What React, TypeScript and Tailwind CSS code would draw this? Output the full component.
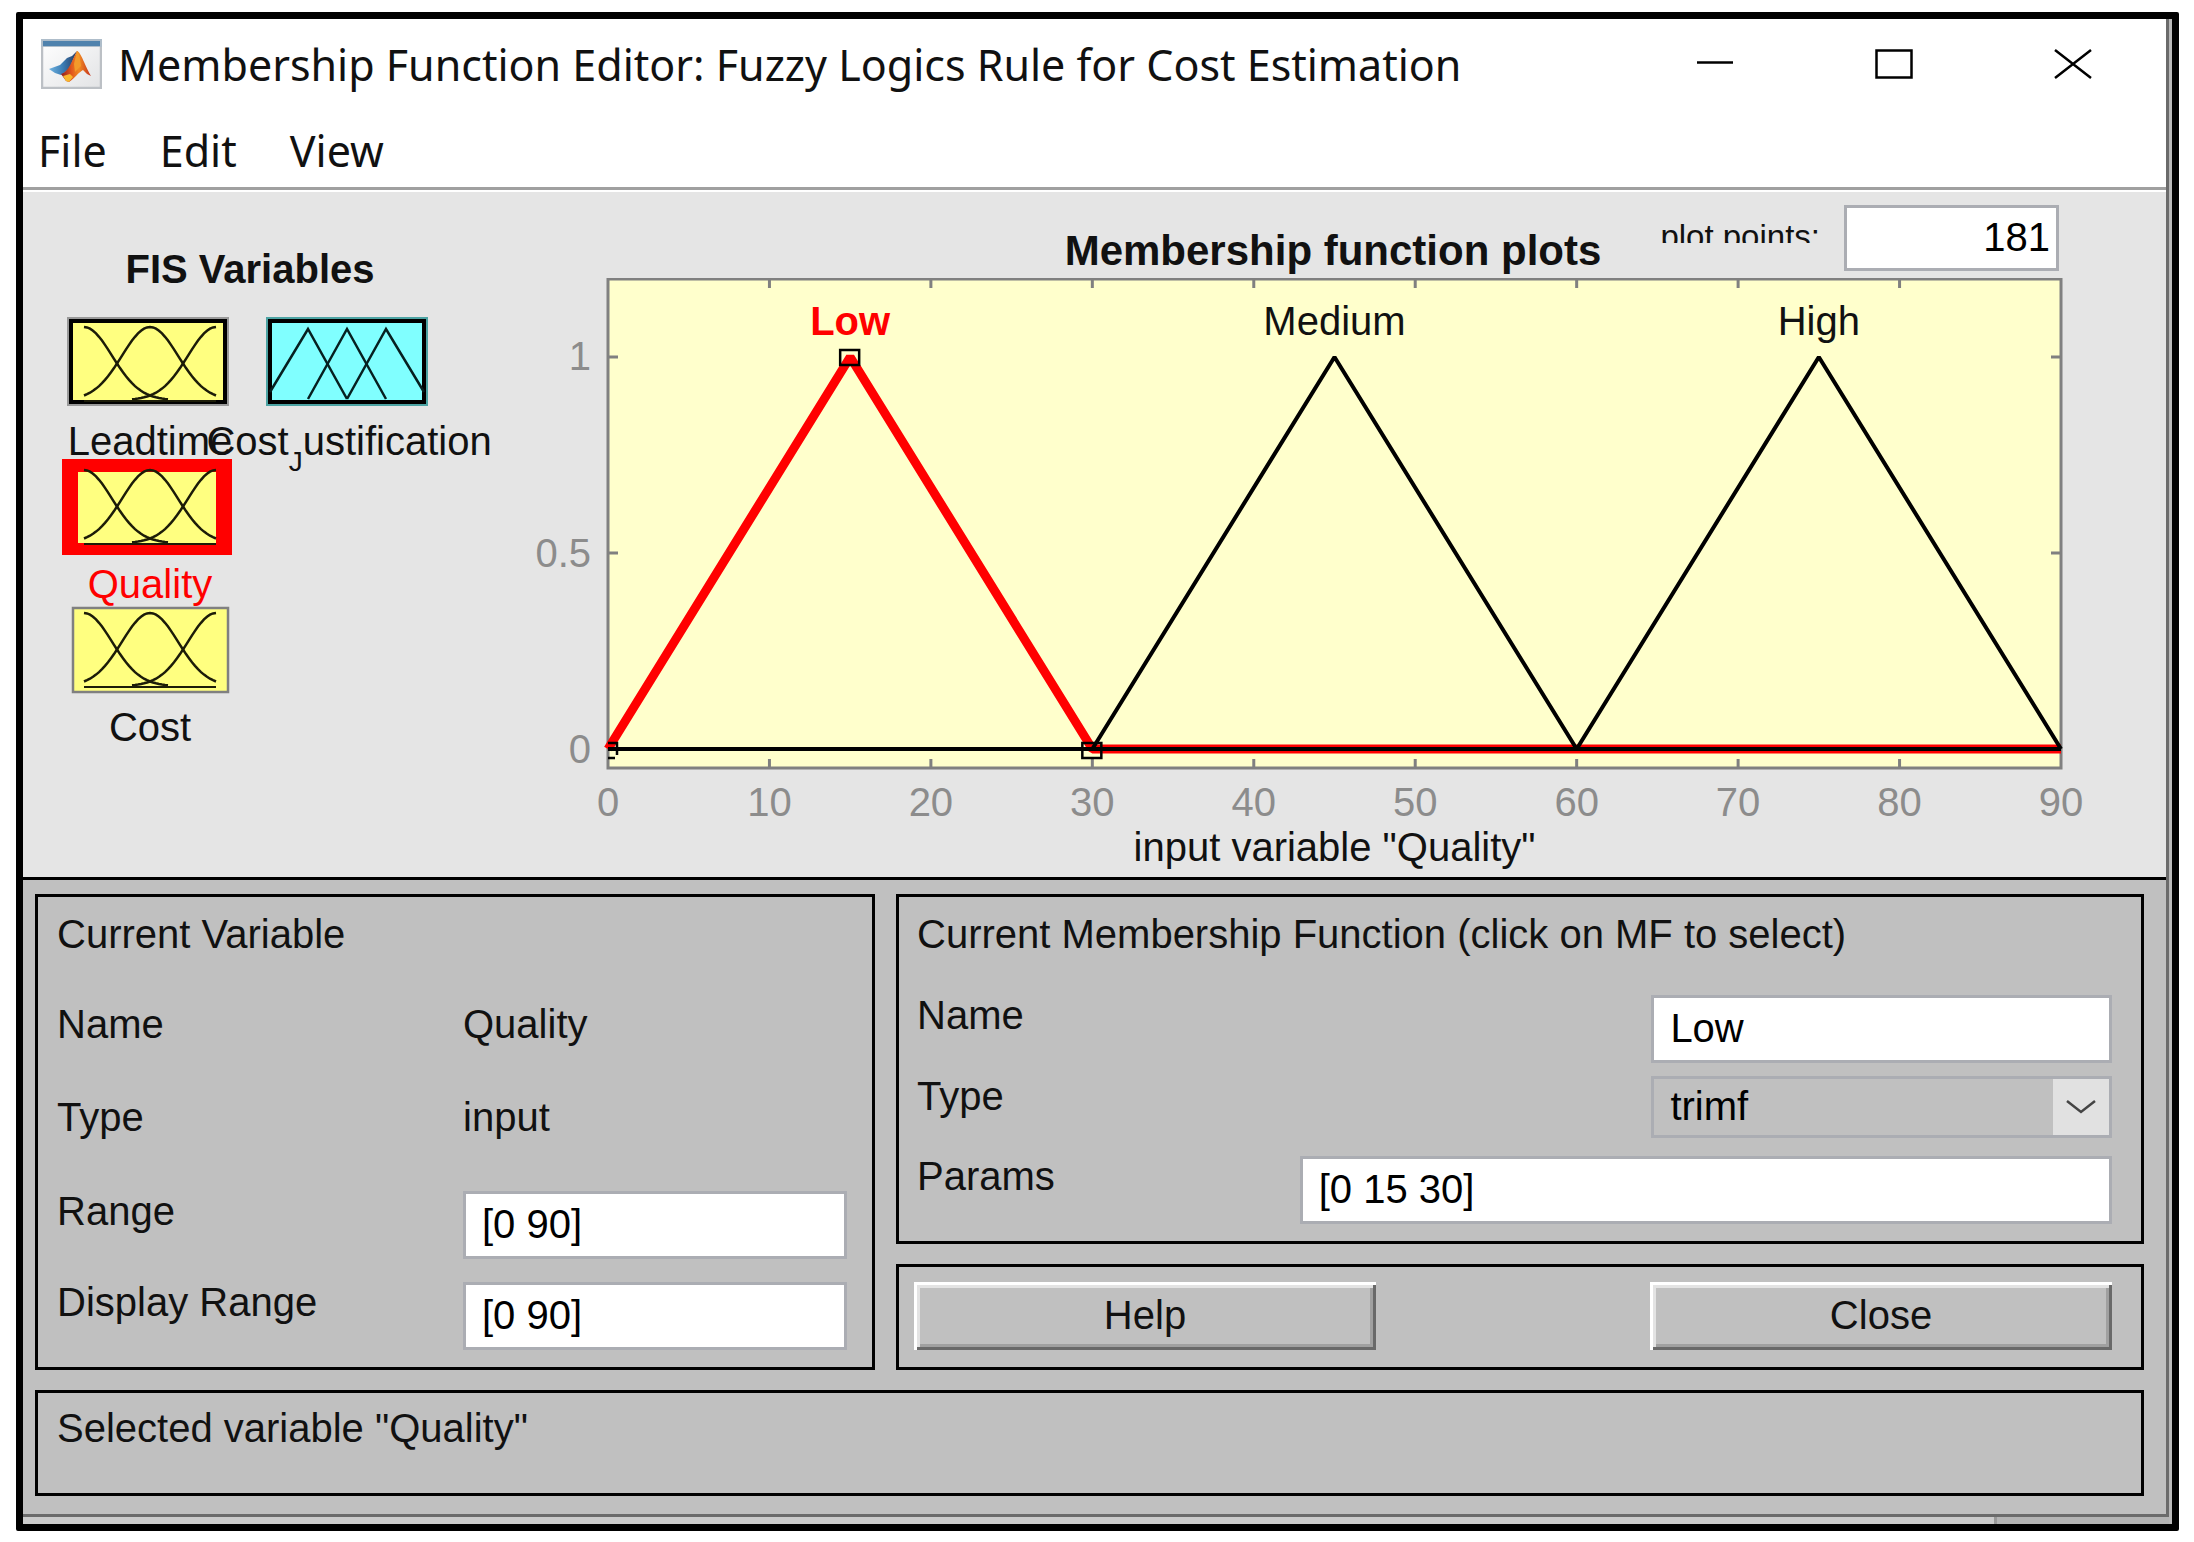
import type { ReactNode } from "react";

type Variable = {
  name: ReactNode;
  kind: "gauss" | "tri";
  state?: "active" | "idle";
};

const PLOT = { left: 81, right: 1534, top: 1, bottom: 490, one: 79, zero: 471 };

const toX = (value: number) =>
  PLOT.left + ((PLOT.right - PLOT.left) * value) / 90;

const toY = (value: number) => PLOT.zero - (PLOT.zero - PLOT.one) * value;

const gaussPath = (center: number) => {
  const points: string[] = [];
  for (let x = 22; x <= 154; x += 3) {
    if (Math.abs(x - center) > 84) continue;
    const y = 84 - 73 * Math.exp(-((x - center) ** 2) / (2 * 28 ** 2));
    points.push(`${x},${y.toFixed(1)}`);
  }
  return `M${points.join("L")}`;
};

const MatlabIcon = () => (
  <svg viewBox="0 0 61 50" className="w-[61px] h-[50px]" aria-hidden="true">
    <defs>
      <linearGradient id="frame" x1="0" y1="0" x2="1" y2="1">
        <stop offset="0" stopColor="#ffffff" />
        <stop offset="1" stopColor="#e2e3e5" />
      </linearGradient>
      <linearGradient id="flame" x1="0" y1="0" x2="1" y2="0">
        <stop offset="0" stopColor="#8c1c1c" />
        <stop offset="0.35" stopColor="#e2581e" />
        <stop offset="0.6" stopColor="#f08a24" />
        <stop offset="1" stopColor="#c5301c" />
      </linearGradient>
      <linearGradient id="wing" x1="0" y1="0" x2="1" y2="0">
        <stop offset="0" stopColor="#6fb3e0" />
        <stop offset="0.5" stopColor="#3b7cb4" />
        <stop offset="1" stopColor="#28395f" />
      </linearGradient>
    </defs>
    <rect x="1" y="1" width="59" height="48" fill="url(#frame)" stroke="#bcc0c5" strokeWidth="2.5" />
    <rect x="0" y="0" width="61" height="8" fill="#aebdca" />
    <rect x="2" y="2" width="57" height="5" fill="#4f82ad" />
    <path d="M8 30L19 26L26 19L31 17L36 12L28 30L20 36L14 34Z" fill="url(#wing)" />
    <path d="M36 12C40 13 44 27 50 37L46 35L42 31C38 33 34 39 28 43L25 42L20 35C28 33 31 21 36 12Z" fill="url(#flame)" />
    <path d="M36 12C38 13 39 20 40 27L34 33L33 25Z" fill="#f39a2b" />
    <path d="M22 37L29 35L32 38L28 43L25 42Z" fill="#f8b62d" />
  </svg>
);

const Thumbnail = ({ kind, state }: Pick<Variable, "kind" | "state">) => (
  <svg viewBox="0 0 170 96" className="block w-[170px] h-24" fill="none" aria-hidden="true">
    {state === "active" && (
      <>
        <rect width="170" height="96" fill="#ff0000" />
        <rect x="16" y="13" width="138" height="71" fill="#ffff80" />
      </>
    )}
    {state === "idle" && (
      <rect x="11" y="6" width="155" height="84" fill="#ffff80" stroke="#808080" strokeWidth="2.5" />
    )}
    {!state && (
      <>
        <rect x="5" y="1" width="162" height="89" fill={kind === "tri" ? "#4ca3a3" : "#999"} />
        <rect x="9" y="5" width="154" height="81" fill={kind === "tri" ? "#80ffff" : "#ffff80"} stroke="#000" strokeWidth="4" />
      </>
    )}
    {kind === "gauss" ? (
      <g stroke="#1c1c08" strokeWidth="2.5">
        <path d={gaussPath(22)} />
        <path d={gaussPath(88)} />
        <path d={gaussPath(154)} />
        <path d="M22 85H154" strokeWidth="2" />
      </g>
    ) : (
      <g stroke="#062020" strokeWidth="2.5">
        <path d="M9 76L47 13L86 83" />
        <path d="M47 83L86 13L125 83" />
        <path d="M86 83L125 13L163 76" />
      </g>
    )}
  </svg>
);

const VariableTile = ({ name, kind, state }: Variable) => (
  <button type="button" className="flex flex-col items-center w-[170px]">
    <Thumbnail kind={kind} state={state} />
    <span
      className={`pt-3 pl-1.5 leading-[35px] whitespace-nowrap ${
        state === "active" ? "text-[#ff0000]" : "text-[#111]"
      }`}
    >
      {name}
    </span>
  </button>
);

const MembershipPlot = () => {
  const ticks = Array.from({ length: 10 }, (_, i) => i * 10);
  const { left, right, top, bottom } = PLOT;

  return (
    <svg viewBox="0 0 1639 599" className="block w-full h-auto">
      <rect x={left} y={top} width={right - left} height={bottom - top} fill="#ffffcc" stroke="#808080" strokeWidth="3" />
      <g stroke="#808080" strokeWidth="3">
        {ticks.slice(1, -1).map((t) => (
          <path key={t} d={`M${toX(t)} ${top}V${top + 9}M${toX(t)} ${bottom}V${bottom - 9}`} />
        ))}
        {[0.5, 1].map((t) => (
          <path key={t} d={`M${left} ${toY(t)}H${left + 10}M${right} ${toY(t)}H${right - 10}`} />
        ))}
      </g>

      <g fill="#8c8c8c" textAnchor="middle">
        {ticks.map((t) => (
          <text key={t} x={toX(t)} y="538">{t}</text>
        ))}
      </g>
      <g fill="#8c8c8c" textAnchor="end">
        <text x="64" y="92">1</text>
        <text x="64" y="289">0.5</text>
        <text x="64" y="485">0</text>
      </g>

      <g fill="none" strokeLinejoin="bevel">
        <path d={`M${toX(0)} ${toY(0)}L${toX(15)} ${toY(1)}L${toX(30)} ${toY(0)}H${right}`} stroke="#ff0000" strokeWidth="9" />
        <path d={`M${left} ${toY(0)}H${right}`} stroke="#000" strokeWidth="4" />
        <path d={`M${toX(30)} ${toY(0)}L${toX(45)} ${toY(1)}L${toX(60)} ${toY(0)}`} stroke="#000" strokeWidth="4" />
        <path d={`M${toX(60)} ${toY(0)}L${toX(75)} ${toY(1)}L${toX(90)} ${toY(0)}`} stroke="#000" strokeWidth="4" />
      </g>
      <g fill="none" stroke="#000" strokeWidth="2.5">
        <rect x={toX(15) - 10} y={toY(1) - 7} width="19" height="15" />
        <rect x={toX(30) - 10} y={toY(0) - 6} width="19" height="15" />
        <path d={`M${left} ${toY(0) - 6}H${left + 9}V${toY(0) + 6}M${left} ${toY(0) + 9}H${left + 7}`} />
      </g>

      <g textAnchor="middle" fill="#111">
        <text x={toX(15)} y="57" fill="#ff0000" fontWeight="bold">Low</text>
        <text x={toX(45)} y="57">Medium</text>
        <text x={toX(75)} y="57">High</text>
        <text x={toX(45)} y="583">input variable "Quality"</text>
      </g>
    </svg>
  );
};

const fieldClass =
  "block w-full h-[68px] px-4 pb-0.5 border-[3px] border-[#abadb3] bg-white text-black";

const buttonClass =
  "h-[68px] pb-0.5 bg-[#c0c0c0] shadow-[inset_3px_3px_#fff,inset_-3px_-3px_#696969,inset_6px_6px_#e3e3e3,inset_-6px_-6px_#a0a0a0]";

const TitleBar = () => (
  <header className="bg-white font-['Noto_Sans',sans-serif] border-b-[3px] border-[#a0a0a0]">
    <div className="flex items-center h-[90px] pl-[18px] pr-1">
      <MatlabIcon />
      <h1 className="flex-1 pt-0.5 pl-4 text-[43px] leading-[50px] whitespace-nowrap">
        Membership Function Editor: Fuzzy Logics Rule for Cost Estimation
      </h1>
      <div className="flex">
        <button type="button" aria-label="Minimize" className="flex items-center justify-center w-[179px] h-[90px]">
          <svg viewBox="0 0 38 30" className="w-[38px] h-[30px]" aria-hidden="true">
            <path d="M1 13.5H37" stroke="#000" strokeWidth="2.5" />
          </svg>
        </button>
        <button type="button" aria-label="Maximize" className="flex items-center justify-center w-[179px] h-[90px]">
          <svg viewBox="0 0 38 30" className="w-[38px] h-[30px]" aria-hidden="true">
            <rect x="1.5" y="1.5" width="35" height="27" fill="none" stroke="#000" strokeWidth="2.5" />
          </svg>
        </button>
        <button type="button" aria-label="Close window" className="flex items-center justify-center w-[179px] h-[90px]">
          <svg viewBox="0 0 38 30" className="w-[38px] h-[30px]" aria-hidden="true">
            <path d="M1 1L37 29M37 1L1 29" stroke="#000" strokeWidth="2.5" />
          </svg>
        </button>
      </div>
    </div>
    <nav className="flex gap-[53px] h-[78px] px-[15px] pt-[17px] text-[43px] leading-[50px]">
      <button type="button" className="self-start">File</button>
      <button type="button" className="self-start">Edit</button>
      <button type="button" className="self-start">View</button>
    </nav>
  </header>
);

const VariablePanel = () => (
  <section className="border-[3px] border-black pt-[17px] pl-[19px] pr-[25px] pb-[17px]">
    <h2 className="h-[90px]">Current Variable</h2>
    <div className="grid grid-cols-[406fr_384fr] grid-rows-[93px_94px_91px_68px]">
      <span>Name</span>
      <span>Quality</span>
      <span>Type</span>
      <span>input</span>
      <label htmlFor="range">Range</label>
      <input id="range" className={fieldClass} defaultValue="[0 90]" />
      <label htmlFor="display-range">Display Range</label>
      <input id="display-range" className={fieldClass} defaultValue="[0 90]" />
    </div>
  </section>
);

const FunctionPanel = () => (
  <section className="border-[3px] border-black pt-[17px] pl-[18px] pr-[29px] pb-[17px]">
    <h2 className="h-[81px] whitespace-nowrap">
      Current Membership Function (click on MF to select)
    </h2>
    <div className="grid grid-cols-[383fr_352fr_461fr] grid-rows-[81px_80px_68px]">
      <label htmlFor="mf-name" className="col-span-2">Name</label>
      <input id="mf-name" className={fieldClass} defaultValue="Low" />
      <label htmlFor="mf-type" className="col-span-2">Type</label>
      <div className="relative">
        <select
          id="mf-type"
          className="block appearance-none w-full h-[62px] px-4 pb-0.5 border-[3px] border-[#abadb3] bg-[#c0c0c0] text-black"
        >
          <option>trimf</option>
        </select>
        <span className="absolute right-[3px] top-[3px] flex items-center justify-center w-14 h-14 bg-[#e1e1e1] pointer-events-none">
          <svg viewBox="0 0 30 14" className="w-[30px] h-[14px]" aria-hidden="true">
            <path d="M1 1L15 12L29 1" fill="none" stroke="#444" strokeWidth="2.5" />
          </svg>
        </span>
      </div>
      <label htmlFor="mf-params">Params</label>
      <input id="mf-params" className={`${fieldClass} col-span-2`} defaultValue="[0 15 30]" />
    </div>
  </section>
);

const App = () => {
  return (
    <div className="bg-white pt-3 pl-4 pr-[15px] pb-2.5 font-['Liberation_Sans',Arial,sans-serif] text-[40px] leading-10 text-[#111]">
      <div className="border-[7px] border-black bg-[#b8b8b8] pr-[3px] rounded-xs">
        <div className="border-r-[3px] border-b-[3px] border-[#6b6b6b]">
          <TitleBar />

          <main>
            <div className="flex bg-[#e5e5e5] border-t-2 border-t-white border-b-[3px] border-b-black">
              <aside className="w-[504px] shrink-0 pl-[39px] pt-[57px]">
                <h2 className="w-[376px] mb-[27px] text-center font-bold">
                  FIS Variables
                </h2>
                <div className="grid grid-cols-[170px_170px] gap-x-[29px]">
                  <VariableTile name="Leadtime" kind="gauss" />
                  <VariableTile
                    name={<>Cost<sub className="text-[28px] -bottom-4">J</sub>ustification</>}
                    kind="tri"
                  />
                  <VariableTile name="Quality" kind="gauss" state="active" />
                  <span />
                  <VariableTile name="Cost" kind="gauss" state="idle" />
                </div>
              </aside>

              <div className="flex-1 min-w-0">
                <div className="grid grid-cols-[1fr_auto_1fr] h-[86px] pt-[13px] pl-20 pr-[107px]">
                  <h2 className="col-start-2 pt-[26px] text-[42px] font-bold whitespace-nowrap">
                    Membership function plots
                  </h2>
                  <div className="flex justify-end gap-6">
                    <label htmlFor="points" className="mt-4 h-[22px] overflow-hidden text-[33px] leading-8 whitespace-nowrap">
                      plot points:
                    </label>
                    <input
                      id="points"
                      className="w-[215px] h-[66px] px-1.5 pb-0.5 border-[3px] border-[#abadb3] bg-white text-right text-black"
                      defaultValue="181"
                    />
                  </div>
                </div>
                <MembershipPlot />
              </div>
            </div>

            <div className="grid grid-cols-[840fr_1248fr] gap-x-[21px] gap-y-5 bg-[#c0c0c0] pt-[14px] pl-3 pr-[22px] pb-[18px]">
              <VariablePanel />
              <div className="flex flex-col gap-5">
                <FunctionPanel />
                <section className="flex justify-between border-[3px] border-black pt-[15px] pb-[17px] pl-[15px] pr-[29px]">
                  <button type="button" className={`${buttonClass} w-[462px]`}>Help</button>
                  <button type="button" className={`${buttonClass} w-[462px]`}>Close</button>
                </section>
              </div>
              <footer className="col-span-2 h-[106px] border-[3px] border-black pt-[15px] pl-[19px]">
                Selected variable "Quality"
              </footer>
            </div>
          </main>
        </div>

        {/* desktop showing below the window edge */}
        <div className="flex justify-end h-[7px] bg-[#cbcbcb]">
          <div className="w-[175px] bg-[#b4b4b4] border-l-[3px] border-[#999]" />
        </div>
      </div>
    </div>
  );
};

export default App;
